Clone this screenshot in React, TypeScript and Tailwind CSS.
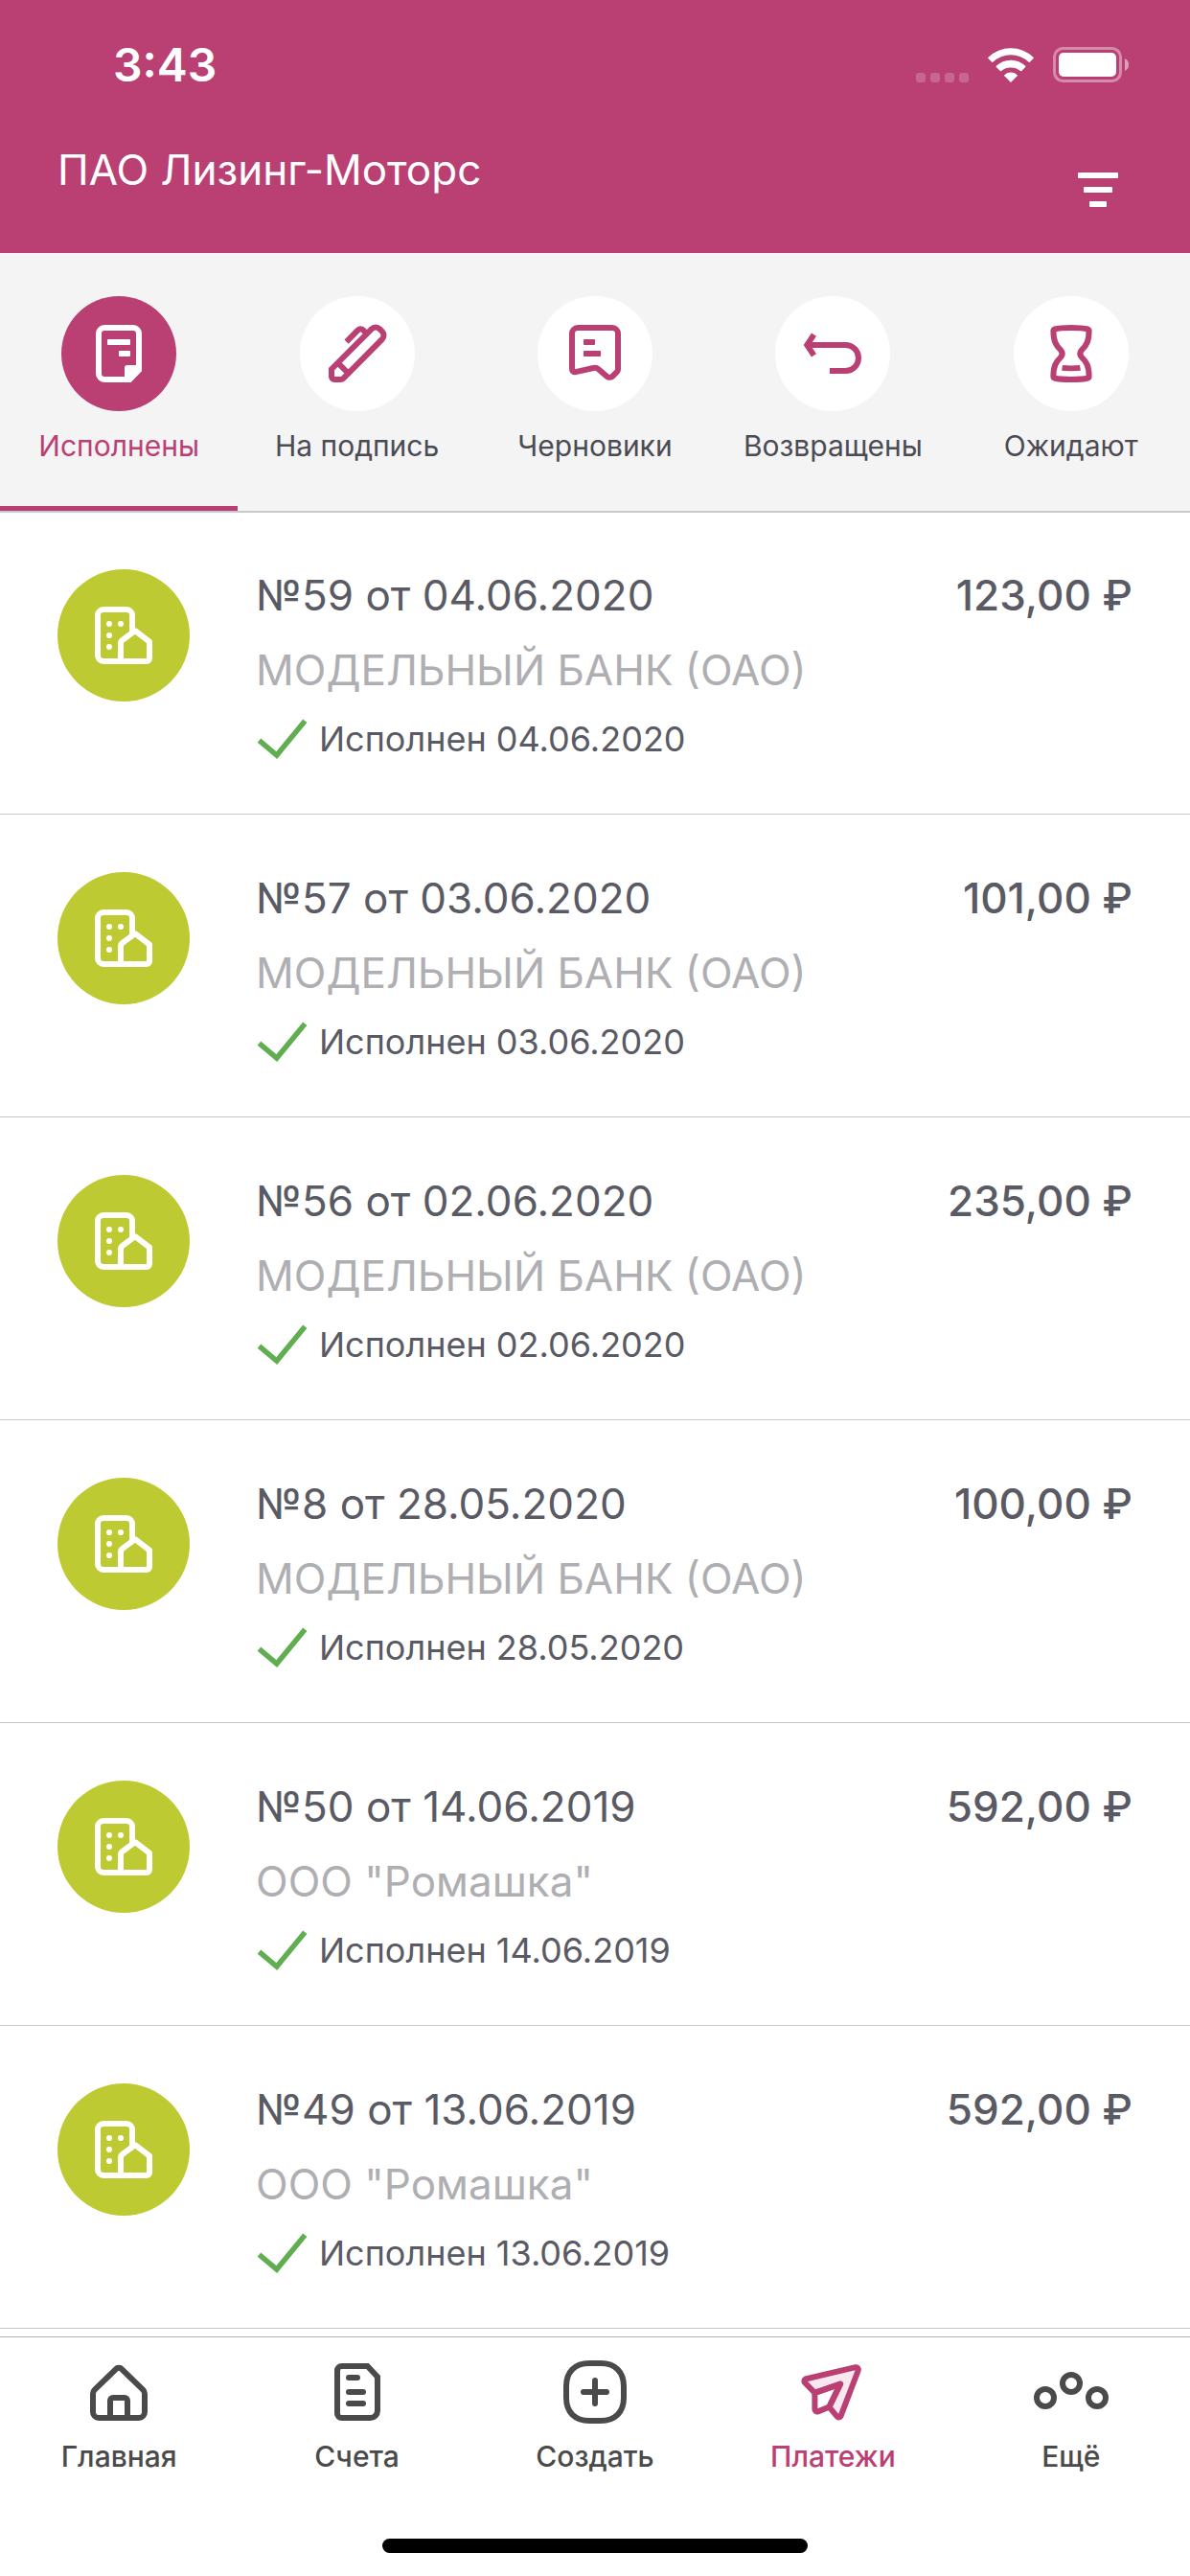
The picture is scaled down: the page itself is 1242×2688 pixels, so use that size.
import type { ReactNode } from "react";

function TabDoneIcon() {
  return (
    <svg viewBox="0 0 24 24" className="size-[72px]" fill="currentColor" aria-hidden="true">
      <path
        fillRule="evenodd"
        d="M7 2h10a3 3 0 0 1 3 3v13.1L16.2 22H7a3 3 0 0 1-3-3V5a3 3 0 0 1 3-3zM7 4a1 1 0 0 0-1 1v14a1 1 0 0 0 1 1h7v-3a1 1 0 0 1 1-1h3V5a1 1 0 0 0-1-1z"
      />
      <rect x="8" y="7" width="8" height="2" rx=".3" />
      <rect x="12" y="11" width="4" height="2" rx=".3" />
    </svg>
  );
}

function TabSignIcon() {
  return (
    <svg viewBox="0 0 24 24" className="size-[72px]" fill="none" stroke="currentColor" strokeWidth="2" aria-hidden="true">
      <path d="M4 21a1 1 0 0 1-1-1v-2.6L17 3.4a1.9 1.9 0 0 1 2.7 0l.9.9a1.9 1.9 0 0 1 0 2.7L7.1 20.6a1.4 1.4 0 0 1-1 .4zM5.2 15.2L9 19M8.2 7.9l4-4.1a1.2 1.2 0 0 1 1.8 0l1 1" />
    </svg>
  );
}

function TabDraftIcon() {
  return (
    <svg viewBox="0 0 24 24" className="size-[72px]" fill="none" stroke="currentColor" strokeWidth="2" aria-hidden="true">
      <path d="M6 3h12a2 2 0 0 1 2 2v12.4c0 .4-.1.7-.4 1l-1.4 1.4a1.5 1.5 0 0 1-2.1.1l-2.9-2.5a2 2 0 0 0-1.8-.4l-6.1 1.4A1 1 0 0 1 4 17.4V5a2 2 0 0 1 2-2z" />
      <rect x="8" y="7" width="4" height="2" rx=".3" fill="currentColor" stroke="none" />
      <rect x="8" y="11" width="6" height="2" rx=".3" fill="currentColor" stroke="none" />
    </svg>
  );
}

function TabReturnedIcon() {
  return (
    <svg viewBox="0 0 24 24" className="size-[72px]" fill="none" stroke="currentColor" strokeWidth="2" aria-hidden="true">
      <path d="M3.2 9h13.3a4.5 4.5 0 0 1 0 9H11M5.5 5.4L3.1 9l2.4 3.6" />
    </svg>
  );
}

function TabWaitingIcon() {
  return (
    <svg viewBox="0 0 24 24" className="size-[72px]" fill="none" stroke="currentColor" strokeWidth="2" strokeLinejoin="round" aria-hidden="true">
      <path d="M6.2 3.5c2.4-.7 9.2-.7 11.6 0 .3.1.4.3.4.6 0 3.5-.9 5.1-2.6 6.7q-1 1.2 0 2.4c1.7 1.6 2.6 3.2 2.6 6.7 0 .3-.1.5-.4.6-2.4.7-9.2.7-11.6 0-.3-.1-.4-.3-.4-.6 0-3.5.9-5.1 2.6-6.7q1-1.2 0-2.4c-1.7-1.6-2.6-3.2-2.6-6.7 0-.3.1-.5.4-.6z" />
      <path d="M9 16q3 .3 6 0l.3 1.9q-3.3.3-6.6 0z" fill="currentColor" stroke="none" />
    </svg>
  );
}

function CompanyIcon() {
  return (
    <svg viewBox="0 0 24 24" className="size-[72px]" fill="none" stroke="currentColor" strokeWidth="2" strokeLinejoin="round" aria-hidden="true">
      <path d="M15 10.5V5a2 2 0 0 0-2-2H5a2 2 0 0 0-2 2v14a2 2 0 0 0 2 2h15a1 1 0 0 0 1-1v-5.800L16 10.4l-4.600 3.400a1 1 0 0 0-.4.8V21" />
      <g fill="currentColor" stroke="none">
        <circle cx="7" cy="8" r="1" />
        <circle cx="11" cy="8" r="1" />
        <circle cx="7" cy="12" r="1" />
        <circle cx="7" cy="16" r="1" />
      </g>
    </svg>
  );
}

function CheckIcon() {
  return (
    <svg viewBox="0 0 54 42" className="h-[42px] w-[54px]" fill="none" stroke="#60ae50" strokeWidth="5.5" aria-hidden="true">
      <path d="M3.500 22.7l18.300 15.300L51.300 2.2" />
    </svg>
  );
}

function HomeIcon() {
  return (
    <svg viewBox="0 0 24 24" className="size-[72px]" fill="none" stroke="currentColor" strokeWidth="2" aria-hidden="true">
      <path d="M10.9 4.1a1.5 1.5 0 0 1 2.2 0l7.3 7.1c.4.4.6.9.6 1.4V19a2 2 0 0 1-2 2H5a2 2 0 0 1-2-2v-6.4c0-.5.2-1 .6-1.4zM9 21v-6a1 1 0 0 1 1-1h4a1 1 0 0 1 1 1v6" />
    </svg>
  );
}

function AccountsIcon() {
  return (
    <svg viewBox="0 0 24 24" className="size-[72px]" fill="none" stroke="currentColor" strokeWidth="2" aria-hidden="true">
      <path d="M6.5 3h9L19 6.7v11.8a2.5 2.5 0 0 1-2.5 2.5h-10A1.5 1.5 0 0 1 5 19.5v-15A1.5 1.5 0 0 1 6.5 3z" />
      <path d="M9 7h3M9 12h5M9 16h5" strokeLinecap="round" />
    </svg>
  );
}

function CreateIcon() {
  return (
    <svg viewBox="0 0 24 24" className="size-[72px]" fill="none" stroke="currentColor" strokeWidth="2" strokeLinecap="round" aria-hidden="true">
      <path d="M10 2h4c5 0 8 3 8 8v4c0 5-3 8-8 8h-4c-5 0-8-3-8-8v-4c0-5 3-8 8-8zM12 8v8M8 12h8" />
    </svg>
  );
}

function PaymentsIcon() {
  return (
    <svg viewBox="0 0 24 24" className="size-[72px]" fill="none" stroke="currentColor" strokeWidth="2" strokeLinejoin="round" aria-hidden="true">
      <path
        d="M2.5 7.5L20 3.4a.8.8 0 0 1 .9 1.1L14.9 20.2a.8.8 0 0 1-1.4.3L10.8 17.2l3.9-8-8.9 3.1-3.4-3.5a.8.8 0 0 1 .1-1.3z"
        fill="#f9e8f0"
      />
      <path d="M5.8 12.3V18a.8.8 0 0 0 1.1.8l3.9-1.6 3.9-8z" />
    </svg>
  );
}

function MoreIcon() {
  return (
    <svg viewBox="0 0 84 72" className="h-[72px] w-[84px]" fill="none" stroke="currentColor" strokeWidth="6" aria-hidden="true">
      <circle cx="15" cy="42" r="9" />
      <circle cx="42" cy="27" r="9" />
      <circle cx="69" cy="42" r="9" />
    </svg>
  );
}

function WifiIcon() {
  return (
    <svg viewBox="0 0 48 36" className="h-[36px] w-[48px]" fill="currentColor" aria-hidden="true">
      <path d="M.5 9.7A34 34 0 0 1 47.5 9.7q.6.7 0 1.3l-3.6 3.8q-.6.5-1.2 0A27 27 0 0 0 5.3 14.8q-.6.5-1.2 0L.5 11q-.6-.6 0-1.3z" />
      <path d="M8.8 18.8A22 22 0 0 1 39.2 18.8q.6.6 0 1.2l-4 4q-.6.5-1.2 0a16.5 16.5 0 0 0-20 0q-.6.5-1.2 0l-4-4q-.6-.6 0-1.2z" />
      <path d="M17.5 28A10 10 0 0 1 30.5 28q.6.6.1 1.2L24 36l-6.6-6.8q-.5-.6.1-1.2z" />
    </svg>
  );
}

function BatteryIcon() {
  return (
    <svg viewBox="0 0 80 37" className="h-[37px] w-[80px]" aria-hidden="true">
      <rect x="1.5" y="1.5" width="69" height="34" rx="9" fill="none" stroke="#fff" strokeOpacity=".4" strokeWidth="3" />
      <rect x="6" y="6" width="60" height="25" rx="5" fill="#fff" />
      <path d="M75 12q4 2 4 6.500T75 25z" fill="#fff" fillOpacity=".5" />
    </svg>
  );
}

function FilterIcon() {
  return (
    <svg viewBox="0 0 42 36" className="h-[36px] w-[42px]" fill="currentColor" aria-hidden="true">
      <rect width="42" height="6" rx="1" />
      <rect x="6" y="15" width="30" height="6" rx="1" />
      <rect x="12" y="30" width="18" height="6" rx="1" />
    </svg>
  );
}

type Item = { label: string; icon: ReactNode; active?: boolean };

const tabs: Item[] = [
  { label: "Исполнены", icon: <TabDoneIcon />, active: true },
  { label: "На подпись", icon: <TabSignIcon /> },
  { label: "Черновики", icon: <TabDraftIcon /> },
  { label: "Возвращены", icon: <TabReturnedIcon /> },
  { label: "Ожидают", icon: <TabWaitingIcon /> },
];

const payments = [
  { title: "№59 от 04.06.2020", payee: "МОДЕЛЬНЫЙ БАНК (ОАО)", status: "Исполнен 04.06.2020", amount: "123,00 ₽" },
  { title: "№57 от 03.06.2020", payee: "МОДЕЛЬНЫЙ БАНК (ОАО)", status: "Исполнен 03.06.2020", amount: "101,00 ₽" },
  { title: "№56 от 02.06.2020", payee: "МОДЕЛЬНЫЙ БАНК (ОАО)", status: "Исполнен 02.06.2020", amount: "235,00 ₽" },
  { title: "№8 от 28.05.2020", payee: "МОДЕЛЬНЫЙ БАНК (ОАО)", status: "Исполнен 28.05.2020", amount: "100,00 ₽" },
  { title: "№50 от 14.06.2019", payee: 'ООО "Ромашка"', status: "Исполнен 14.06.2019", amount: "592,00 ₽" },
  { title: "№49 от 13.06.2019", payee: 'ООО "Ромашка"', status: "Исполнен 13.06.2019", amount: "592,00 ₽" },
];

const navItems: Item[] = [
  { label: "Главная", icon: <HomeIcon /> },
  { label: "Счета", icon: <AccountsIcon /> },
  { label: "Создать", icon: <CreateIcon /> },
  { label: "Платежи", icon: <PaymentsIcon />, active: true },
  { label: "Ещё", icon: <MoreIcon /> },
];

export default function App() {
  return (
    <div className="flex min-h-screen flex-col bg-white font-['Inter',sans-serif] text-[#5a5a64]">
      <header className="bg-[#ba4074] text-white">
        <div className="flex h-[132px] items-center justify-between pt-[3px] pr-[63px] pl-[118px]">
          <span className="text-[48px] leading-[54px] font-semibold">3:43</span>
          <div className="flex items-end">
            <div className="mr-5 flex gap-[5px]">
              <span className="size-[10px] rounded-[3px] bg-white/20" />
              <span className="size-[10px] rounded-[3px] bg-white/20" />
              <span className="size-[10px] rounded-[3px] bg-white/20" />
              <span className="size-[10px] rounded-[3px] bg-white/20" />
            </div>
            <WifiIcon />
            <div className="ml-5">
              <BatteryIcon />
            </div>
          </div>
        </div>
        <div className="flex h-[132px] items-start justify-between px-[60px]">
          <h1 className="text-[44px] leading-[90px] font-normal">ПАО Лизинг-Моторс</h1>
          <button type="button" aria-label="Фильтр" className="flex h-full w-[72px] items-center justify-center">
            <FilterIcon />
          </button>
        </div>
      </header>

      <div role="tablist" className="grid grid-cols-5 border-b-2 border-[#c5cacf] bg-[#f4f4f4]">
        {tabs.map((tab) => (
          <button
            key={tab.label}
            type="button"
            role="tab"
            aria-selected={!!tab.active}
            className={
              tab.active
                ? "flex flex-col items-center gap-[15px] border-b-[5px] border-[#ba4074] pt-[45px] pb-[42px] text-[#ba4074]"
                : "flex flex-col items-center gap-[15px] border-b-[5px] border-transparent pt-[45px] pb-[42px] text-[#4b4b54]"
            }
          >
            <span
              className={
                tab.active
                  ? "flex size-[120px] items-center justify-center rounded-full bg-[#ba4074] text-white"
                  : "flex size-[120px] items-center justify-center rounded-full bg-white text-[#ba4074]"
              }
            >
              {tab.icon}
            </span>
            <span className="text-[30px] leading-[42px]">{tab.label}</span>
          </button>
        ))}
      </div>

      <main className="flex-1">
        <ul className="-mt-px">
          {payments.map((payment) => (
            <li key={payment.title} className="border-b border-[#c8c8cb]">
              <a href="#payment" className="flex items-start px-[60px] pt-[60px] pb-[57px]">
                <span className="flex size-[138px] shrink-0 items-center justify-center rounded-full bg-[#beca32] text-white">
                  <CompanyIcon />
                </span>
                <span className="ml-[69px] flex min-w-0 flex-1 flex-col gap-6">
                  <span className="text-[44px] leading-[54px]">{payment.title}</span>
                  <span className="text-[44px] leading-[54px] text-[#afafb3]">{payment.payee}</span>
                  <span className="flex items-center gap-3 text-[36px] leading-[42px]">
                    <CheckIcon />
                    {payment.status}
                  </span>
                </span>
                <span className="text-[44px] leading-[54px] font-medium">{payment.amount}</span>
              </a>
            </li>
          ))}
        </ul>
      </main>

      <footer className="border-t border-[#b2b2b2] bg-white">
        <nav className="grid grid-cols-5 pt-[21px]">
          {navItems.map((item) => (
            <a
              key={item.label}
              href="#section"
              aria-current={item.active ? "page" : undefined}
              className={
                item.active
                  ? "flex flex-col items-center gap-[10px] text-[#ba4074]"
                  : "flex flex-col items-center gap-[10px] text-[#4a4a4a]"
              }
            >
              {item.icon}
              <span className="text-[30px] leading-[42px] font-medium">{item.label}</span>
            </a>
          ))}
        </nav>
        <div className="mx-auto mt-[65px] mb-6 h-[15px] w-[444px] rounded-full bg-black" />
      </footer>
    </div>
  );
}
